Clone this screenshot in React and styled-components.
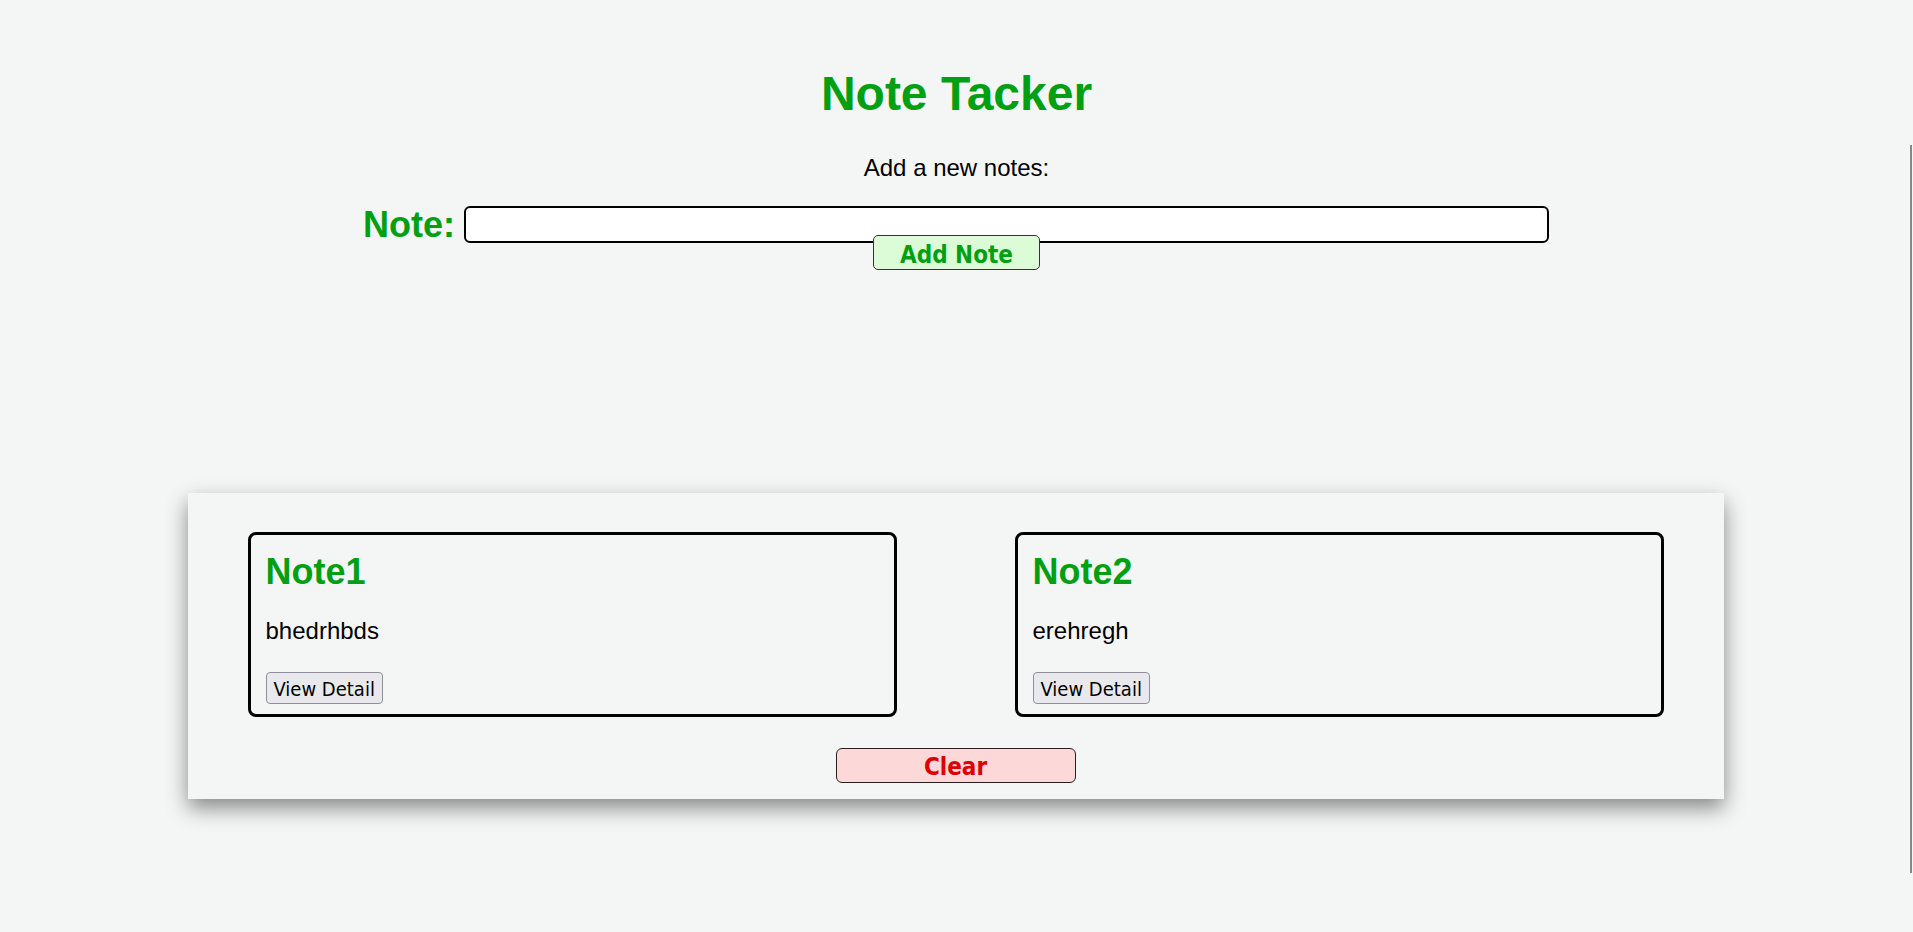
import styled, { createGlobalStyle } from 'styled-components'
import { useState } from 'react'

const GlobalStyle = createGlobalStyle`
    html, body {
        margin: 0;
        padding: 0;
        background: #f4f6f5;
    }
    body {
        font-family: "Liberation Sans", Arial, sans-serif;
        font-size: 24px;
        color: #000;
    }
`

const notesData = [
    { id: 1, title: 'Note1', text: 'bhedrhbds' },
    { id: 2, title: 'Note2', text: 'erehregh' },
]

export default function App() {
    const [notes, setNotes] = useState(notesData)
    const [value, setValue] = useState('')

    const addNote = () => {
        if (!value) return
        setNotes([...notes, { id: Date.now(), title: `Note${notes.length + 1}`, text: value }])
        setValue('')
    }

    return (
        <Page>
            <GlobalStyle />
            <Title>Note Tacker</Title>
            <Subtitle>Add a new notes:</Subtitle>
            <NoteRow>
                <Label htmlFor='note'>Note:</Label>
                <Input id='note' value={value} onChange={e => setValue(e.target.value)} />
            </NoteRow>
            <AddButton onClick={addNote}>Add Note</AddButton>
            <Panel>
                <CardGrid>
                    {notes.map(note => (
                        <Card key={note.id}>
                            <CardTitle>{note.title}</CardTitle>
                            <CardText>{note.text}</CardText>
                            <DetailButton>View Detail</DetailButton>
                        </Card>
                    ))}
                </CardGrid>
                <ClearButton onClick={() => setNotes([])}>Clear</ClearButton>
            </Panel>
            <EdgeLine />
        </Page>
    )
}

const Page = styled.div`
    min-height: 932px;
    padding-top: 66px;
    box-sizing: border-box;
    display: flex;
    flex-direction: column;
    align-items: center;
`

const Title = styled.h1`
    margin: 0;
    font-size: 48px;
    line-height: 55px;
    font-weight: bold;
    color: #01a012;
`

const Subtitle = styled.p`
    margin: 33px 0 0;
    font-size: 24px;
    line-height: 27.6px;
`

const NoteRow = styled.div`
    display: flex;
    align-items: center;
    gap: 9px;
    margin-top: 22px;
    margin-left: -1px;
`

const Label = styled.label`
    font-size: 36px;
    line-height: 41px;
    font-weight: bold;
    color: #01a012;
`

const Input = styled.input`
    width: 1085px;
    height: 37px;
    box-sizing: border-box;
    border: 2px solid #000;
    border-radius: 6px;
    background: #fff;
    font-size: 20px;
    padding: 0 8px;
    outline: none;
`

const ButtonFont = `
    font-family: "DejaVu Sans Condensed", "DejaVu Sans", Verdana, sans-serif;
    font-stretch: condensed;
    cursor: pointer;
    box-sizing: border-box;
`

const AddButton = styled.button`
    ${ButtonFont}
    margin-top: -10px;
    width: 167px;
    height: 35px;
    padding: 5px 0 0;
    background: #dcfcd8;
    border: 1px solid #333;
    border-radius: 5px;
    color: #01a012;
    font-size: 24px;
    font-weight: bold;
`

const Panel = styled.section`
    margin-top: 223px;
    margin-left: -2px;
    width: 1536px;
    box-sizing: border-box;
    padding: 39px 60px 16px;
    background: #f4f6f5;
    box-shadow: 0 9px 20px 0 rgba(0, 0, 0, 0.45);
    display: flex;
    flex-direction: column;
    align-items: center;
`

const CardGrid = styled.div`
    display: grid;
    grid-template-columns: 649px 649px;
    column-gap: 118px;
    width: 100%;
`

const Card = styled.div`
    height: 185px;
    box-sizing: border-box;
    border: 3px solid #000;
    border-radius: 8px;
    padding: 16px 15px 0;
    display: flex;
    flex-direction: column;
    align-items: flex-start;
`

const CardTitle = styled.h2`
    margin: 0;
    font-size: 36px;
    line-height: 41px;
    font-weight: bold;
    color: #01a012;
`

const CardText = styled.p`
    margin: 25px 0 0;
    font-size: 24px;
    line-height: 27.6px;
`

const DetailButton = styled.button`
    ${ButtonFont}
    margin-top: 28px;
    height: 32px;
    padding: 2px 7px 0;
    background: #e9e9ed;
    border: 1px solid #8f8f9d;
    border-radius: 4px;
    color: #000;
    font-size: 20px;
`

const ClearButton = styled.button`
    ${ButtonFont}
    margin-top: 31px;
    width: 240px;
    height: 35px;
    padding: 4px 0 0;
    background: #fcd8d8;
    border: 1px solid #222;
    border-radius: 6px;
    color: #dd0000;
    font-size: 24px;
    font-weight: bold;
`

const EdgeLine = styled.div`
    position: fixed;
    right: 1px;
    top: 145px;
    width: 2px;
    height: 728px;
    background: #888;
`
